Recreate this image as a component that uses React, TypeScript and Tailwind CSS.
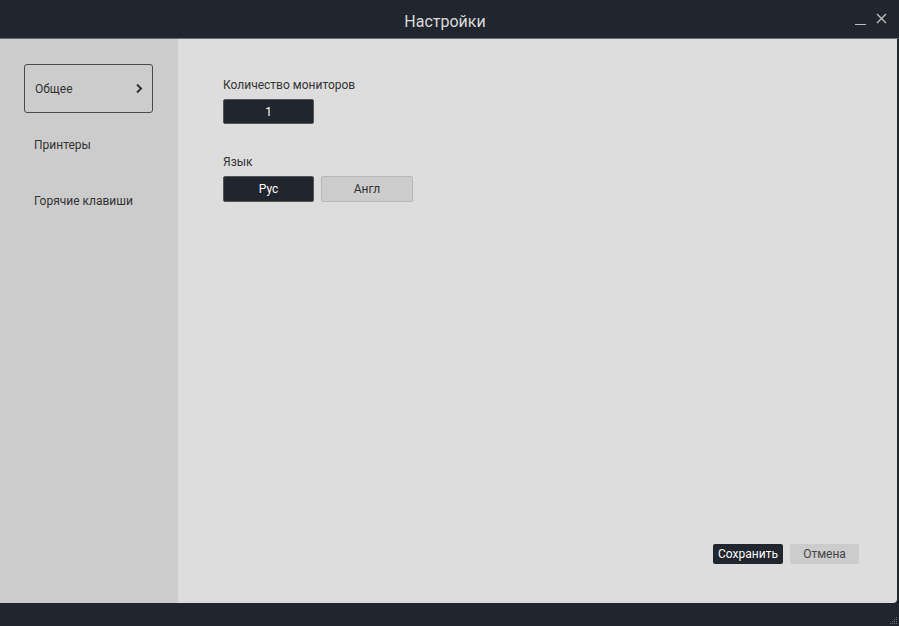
import React from 'react';

const App: React.FC = () => {
  return (
    <div className="w-[899px] h-[626px] bg-[#21252d] flex flex-col overflow-hidden" style={{ fontFamily: 'Roboto, "Noto Sans", sans-serif' }}>
      {/* Title bar */}
      <div className="h-[38px] flex items-center relative shrink-0">
        <div className="flex-1 text-center text-[16px] text-[#dcdcdc] pt-[6px] pr-[9px]">Настройки</div>
        <div className="absolute right-[12px] top-[11px] flex items-center gap-[10px] text-[#bfbfbf]">
          <div className="w-[11px] h-[1px] bg-[#bfbfbf] mt-[13px]" />
          <svg width="11" height="11" viewBox="0 0 11 11" stroke="currentColor" strokeWidth="1.4">
            <path d="M1 1 L10 10 M10 1 L1 10" />
          </svg>
        </div>
      </div>
      <div className="h-[1px] bg-[#6b6e73] shrink-0" />

      {/* Body */}
      <div className="flex h-[564px] shrink-0 mr-[2px] rounded-br-[4px] overflow-hidden">
        {/* Sidebar */}
        <div className="w-[178px] bg-[#cccccc] pt-[25px] px-[24px] flex flex-col text-[12px] text-[#333]">
          <div className="h-[49px] w-[129px] border border-[#4a4a4a] rounded-[3px] flex items-center justify-between pl-[10px] pr-[9px]">
            <span>Общее</span>
            <svg width="8" height="11" viewBox="0 0 8 11" fill="none" stroke="#333" strokeWidth="2">
              <path d="M2 1.5 L6 5.5 L2 9.5" />
            </svg>
          </div>
          <div className="pl-[10px] mt-[23px]">Принтеры</div>
          <div className="pl-[10px] mt-[38px]">Горячие клавиши</div>
        </div>

        {/* Main */}
        <div className="flex-1 bg-[#dddddd] flex flex-col pl-[45px] pr-[38px] pt-[39px] pb-[39px] text-[12px] text-[#333]">
          <div className="leading-[14px]">Количество мониторов</div>
          <div className="mt-[7px] w-[91px] h-[25px] bg-[#21252d] rounded-[2px] border border-[#555] text-white flex items-center justify-center">1</div>

          <div className="mt-[31px] leading-[14px]">Язык</div>
          <div className="mt-[7px] flex gap-[7px]">
            <div className="w-[91px] h-[26px] bg-[#21252d] rounded-[2px] border border-[#555] text-white flex items-center justify-center">Рус</div>
            <div className="w-[92px] h-[26px] bg-[#cccccc] rounded-[2px] border border-[#b8b8b8] text-[#333] flex items-center justify-center">Англ</div>
          </div>

          <div className="mt-auto flex justify-end gap-[7px]">
            <div className="w-[70px] h-[20px] bg-[#21252d] rounded-[2px] text-white flex items-center justify-center">Сохранить</div>
            <div className="w-[69px] h-[20px] bg-[#cccccc] rounded-[2px] text-[#444] flex items-center justify-center">Отмена</div>
          </div>
        </div>
      </div>

      {/* Bottom bar */}
      <div className="flex-1 relative">
        <svg className="absolute right-[1px] bottom-[1px]" width="10" height="10" viewBox="0 0 10 10" fill="#6b6e73">
          <rect x="8" y="2" width="1" height="1" />
          <rect x="6" y="4" width="1" height="1" />
          <rect x="8" y="4" width="1" height="1" />
          <rect x="4" y="6" width="1" height="1" />
          <rect x="6" y="6" width="1" height="1" />
          <rect x="8" y="6" width="1" height="1" />
          <rect x="2" y="8" width="1" height="1" />
          <rect x="4" y="8" width="1" height="1" />
          <rect x="6" y="8" width="1" height="1" />
          <rect x="8" y="8" width="1" height="1" />
        </svg>
      </div>
    </div>
  );
};

export default App;
